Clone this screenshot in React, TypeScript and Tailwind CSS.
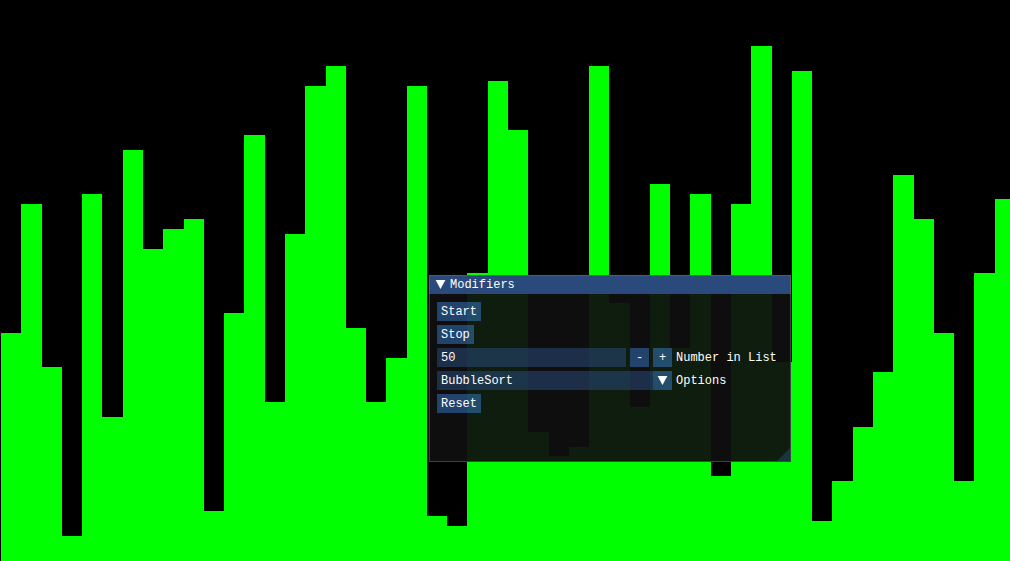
import { useState } from "react";

const CHART_WIDTH = 1010;
const CHART_HEIGHT = 561;
const BAR_START = 1.11;
const BAR_STEP = 20.276;

const values = [
  228, 357, 194, 25, 367, 144, 411, 312, 332, 342,
  50, 248, 426, 159, 327, 475, 495, 233, 159, 203,
  475, 45, 35, 288, 480, 431, 129, 105, 114, 495,
  258, 154, 377, 213, 367, 85, 357, 515, 199, 490,
  40, 80, 134, 189, 386, 342, 228, 80, 288, 362,
];

const algorithms = ["BubbleSort", "SelectionSort", "InsertionSort"];

const buttonClass =
  "h-[19px] bg-[#4296fa]/40 px-1 pt-px text-center hover:bg-[#4296fa] active:bg-[#0f87fa]";

const stepButtonClass =
  "size-[19px] bg-[#4296fa]/40 pt-px hover:bg-[#4296fa] active:bg-[#0f87fa]";

function BarChart() {
  const edge = (i: number) => Math.round(BAR_START + i * BAR_STEP);
  return (
    <svg
      className="block h-screen w-full"
      viewBox={`0 0 ${CHART_WIDTH} ${CHART_HEIGHT}`}
      preserveAspectRatio="none"
      shapeRendering="crispEdges"
      aria-hidden="true"
    >
      {values.map((value, i) => (
        <rect
          key={i}
          x={edge(i)}
          y={CHART_HEIGHT - value}
          width={edge(i + 1) - edge(i)}
          height={value}
          fill="#00ff00"
        />
      ))}
    </svg>
  );
}

function DownArrow() {
  return (
    <svg className="block size-[13px]" viewBox="0 0 13 13" aria-hidden="true">
      <path d="M1.6 2.1h9.8L6.5 11z" fill="#fff" />
    </svg>
  );
}

function ModifiersWindow() {
  const [open, setOpen] = useState(true);
  const [count, setCount] = useState(50);
  const [algorithm, setAlgorithm] = useState(algorithms[0]);

  return (
    <section
      aria-label="Modifiers"
      className="absolute top-[275px] left-[429px] w-[362px] bg-[#0f0f0f]/94 after:pointer-events-none after:absolute after:inset-0 after:border after:border-[#6e6e80]/50"
    >
      <header className="flex h-[19px] items-center gap-[3px] bg-[#294a7a] px-[5px]">
        <button type="button" aria-label="Collapse" onClick={() => setOpen(!open)}>
          <DownArrow />
        </button>
        <h1 className="pt-0.5">Modifiers</h1>
      </header>

      {open && (
        <div className="flex min-h-[168px] flex-col items-start gap-1 p-2">
          <button type="button" className={buttonClass}>Start</button>
          <button type="button" className={buttonClass}>Stop</button>

          <div className="flex h-[19px] w-full gap-1">
            <div className="flex w-[235px] gap-1">
              <input
                id="count"
                type="text"
                inputMode="numeric"
                value={count}
                onChange={(e) => setCount(Number(e.target.value) || 0)}
                className="h-[19px] min-w-0 flex-1 bg-[#294a7a]/54 px-1 pt-0.5 outline-none"
              />
              <button
                type="button"
                aria-label="Decrease"
                className={stepButtonClass}
                onClick={() => setCount(count - 1)}
              >
                -
              </button>
              <button
                type="button"
                aria-label="Increase"
                className={stepButtonClass}
                onClick={() => setCount(count + 1)}
              >
                +
              </button>
            </div>
            <label htmlFor="count" className="pt-px">Number in List</label>
          </div>

          <div className="flex h-[19px] w-full gap-1">
            <div className="relative flex h-[19px] w-[235px]">
              <div className="flex-1 bg-[#294a7a]/54" />
              <div className="flex size-[19px] items-center justify-center bg-[#4296fa]/40">
                <DownArrow />
              </div>
              <select
                id="algorithm"
                value={algorithm}
                onChange={(e) => setAlgorithm(e.target.value)}
                className="absolute inset-0 appearance-none bg-transparent px-1 pt-px outline-none"
              >
                {algorithms.map((name) => (
                  <option key={name} className="bg-[#141414]">{name}</option>
                ))}
              </select>
            </div>
            <label htmlFor="algorithm" className="pt-px">Options</label>
          </div>

          <button type="button" className={buttonClass}>Reset</button>
        </div>
      )}

      <svg
        className="absolute right-px bottom-px size-[13px] cursor-nwse-resize"
        viewBox="0 0 13 13"
        aria-hidden="true"
      >
        <path d="M13 0v13H0z" fill="#4296fa" fillOpacity="0.2" />
      </svg>
    </section>
  );
}

export default function App() {
  return (
    <main className="relative min-h-screen overflow-hidden bg-black font-['Liberation_Mono',monospace] text-[12px] leading-[19px] text-white">
      <BarChart />
      <ModifiersWindow />
    </main>
  );
}
